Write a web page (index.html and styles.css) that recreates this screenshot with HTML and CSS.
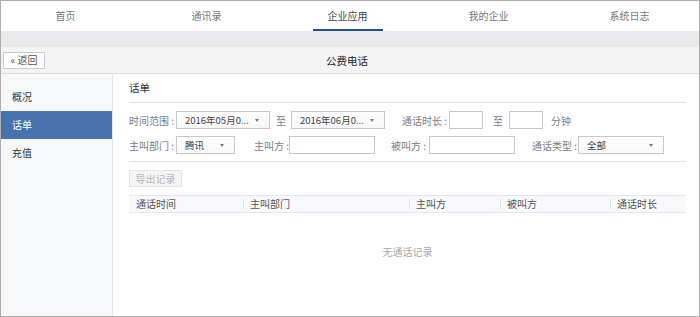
FILE: index.html
```html
<!DOCTYPE html>
<html lang="zh-CN">
<head>
<meta charset="utf-8">
<title>公费电话</title>
<link rel="stylesheet" href="styles.css">
</head>
<body>
<div class="frame">
  <nav class="topnav">
    <a class="tab">首页</a>
    <a class="tab">通讯录</a>
    <a class="tab active"><span>企业应用</span></a>
    <a class="tab">我的企业</a>
    <a class="tab">系统日志</a>
  </nav>
  <div class="band"></div>
  <div class="titlebar">
    <div class="left"><button class="back">« 返回</button></div>
    <div class="title">公费电话</div>
    <div class="right"></div>
  </div>
  <div class="body">
    <aside class="sidebar">
      <div class="item">概况</div>
      <div class="item active">话单</div>
      <div class="item">充值</div>
    </aside>
    <main class="main">
      <div class="heading">话单</div>
      <div class="filters">
        <div class="row">
          <span class="label w47">时间范围 :</span>
          <div class="select w94"><span>2016年05月0...</span><i class="caret"></i></div>
          <span class="sep m6">至</span>
          <div class="select w94 m5"><span>2016年06月0...</span><i class="caret"></i></div>
          <span class="label w47 m17">通话时长 :</span>
          <div class="input w34"></div>
          <span class="sep m10">至</span>
          <div class="input w34 m6"></div>
          <span class="label m8">分钟</span>
        </div>
        <div class="row">
          <span class="label w47">主叫部门 :</span>
          <div class="select w59"><span>腾讯</span><i class="caret"></i></div>
          <span class="label w35 m19">主叫方 :</span>
          <div class="input w86"></div>
          <span class="label w38 m16">被叫方 :</span>
          <div class="input w86"></div>
          <span class="label w46 m17">通话类型 :</span>
          <div class="select w86"><span>全部</span><i class="caret"></i></div>
        </div>
      </div>
      <div class="actions"><button class="export" disabled>导出记录</button></div>
      <div class="thead">
        <div class="th c1">通话时间</div>
        <div class="th c2">主叫部门</div>
        <div class="th c3">主叫方</div>
        <div class="th c4">被叫方</div>
        <div class="th c5">通话时长</div>
      </div>
      <div class="empty">无通话记录</div>
    </main>
  </div>
</div>
</body>
</html>
```
FILE: styles.css
```css
* { box-sizing: border-box; }
html, body { margin: 0; padding: 0; background: #fff; }
body {
  font-family: "Noto Sans CJK SC", "Noto Sans", "Liberation Sans", sans-serif;
  font-size: 10px;
  color: #333;
}
.frame {
  width: 700px;
  height: 317px;
  border: 1px solid #aeaeae;
  display: flex;
  flex-direction: column;
  overflow: hidden;
}
.topnav {
  height: 30px;
  display: grid;
  grid-template-columns: repeat(5, 141px);
  margin-left: -6px;
  background: #fff;
}
.tab {
  display: flex;
  align-items: center;
  justify-content: center;
  color: #74787f;
  line-height: 1;
}
.tab.active { color: #3e4450; }
.tab.active span {
  height: 100%;
  width: 70px;
  display: flex;
  align-items: center;
  justify-content: center;
  border-bottom: 2px solid #2c4d7c;
  padding-top: 2px;
}
.band { height: 16px; background: #e9eaec; }
.titlebar {
  height: 27px;
  background: #f4f4f4;
  border-bottom: 1px solid #dcdcdc;
  display: grid;
  grid-template-columns: 1fr auto 1fr;
  align-items: center;
}
.left { padding-left: 2px; display: flex; align-items: center; }
.back {
  width: 42px;
  height: 17px;
  padding: 0;
  margin: 0;
  border: 1px solid #c9c9c9;
  background: #fff;
  font-family: inherit;
  font-size: 10px;
  color: #555;
  line-height: 1;
  border-radius: 1px;
}
.title { color: #222; font-size: 10.5px; padding-right: 6px; }
.body { flex: 1; display: flex; min-height: 0; }
.sidebar {
  width: 112px;
  background: #f7f8fa;
  border-right: 1px solid #e2e4e8;
  padding-top: 9px;
}
.item {
  height: 28px;
  line-height: 28px;
  padding-left: 11px;
  color: #333;
}
.item.active { background: #4673ab; color: #fff; }
.main { flex: 1; padding: 0 13px 0 16px; background: #fff; }
.heading {
  height: 29px;
  line-height: 28px;
  border-bottom: 1px solid #dfe1e4;
  color: #333;
  font-size: 10.5px;
}
.filters {
  padding: 8px 0 7px;
  border-bottom: 1px solid #e3e5e8;
  display: flex;
  flex-direction: column;
  gap: 7px;
}
.row { display: flex; align-items: center; height: 18px; }
.label { color: #7a7d82; white-space: nowrap; flex: none; }
.sep { color: #7a7d82; flex: none; }
.w34 { width: 34px; }
.w35 { width: 35px; }
.w38 { width: 38px; }
.w46 { width: 46px; }
.w47 { width: 47px; }
.w59 { width: 59px; }
.w86 { width: 86px; }
.w94 { width: 94px; }
.m5 { margin-left: 5px; }
.m6 { margin-left: 6px; }
.m8 { margin-left: 8px; }
.m10 { margin-left: 10px; }
.m16 { margin-left: 16px; }
.m17 { margin-left: 17px; }
.m19 { margin-left: 19px; }
.select {
  height: 18px;
  flex: none;
  border: 1px solid #c6c8cc;
  background: linear-gradient(#fff, #f7f7f7);
  display: flex;
  align-items: center;
  justify-content: space-between;
  padding: 0 10px 0 8px;
  color: #444;
  white-space: nowrap;
}
.select span { font-size: 9.5px; }
.caret {
  width: 0;
  height: 0;
  flex: none;
  border-left: 2px solid transparent;
  border-right: 2px solid transparent;
  border-top: 3px solid #777;
}
.input {
  height: 18px;
  flex: none;
  border: 1px solid #c6c8cc;
  background: #fff;
}
.actions { padding: 8px 0 8px; }
.export {
  width: 53px;
  height: 17px;
  padding: 0;
  margin: 0;
  border: 1px solid #e4e4e4;
  background: #f5f5f5;
  color: #b8b8b8;
  font-family: inherit;
  font-size: 10px;
  line-height: 1;
  display: block;
}
.thead {
  height: 18px;
  display: grid;
  grid-template-columns: 114px 166px 91px 110px 1fr;
  background: #f7f9fb;
  border-top: 1px solid #e3e8ee;
  border-bottom: 1px solid #e3e8ee;
  align-items: center;
}
.th {
  color: #555;
  padding-left: 6px;
  border-left: 1px solid #dfe2e6;
  line-height: 10px;
  height: 10px;
  display: flex;
  align-items: center;
}
.th.c1 { border-left: none; padding-left: 7px; }
.empty {
  text-align: center;
  color: #a8a8a8;
  padding-top: 31px;
}
```
